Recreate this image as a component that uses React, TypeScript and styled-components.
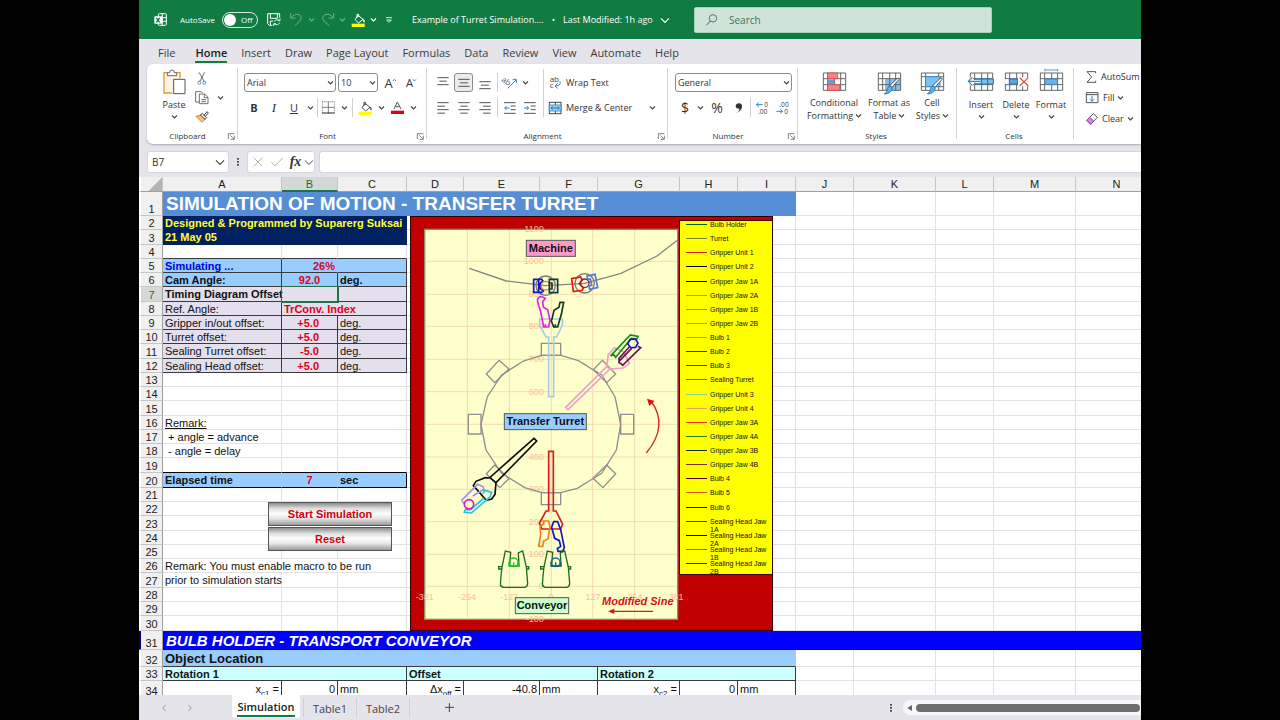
import React from "react";
import styled, { createGlobalStyle, css } from "styled-components";

const UI = `"Open Sans", "Noto Sans", sans-serif`;
const SHEET = `"Liberation Sans", Arial, sans-serif`;
const GREEN = "#107c41";

const GlobalStyle = createGlobalStyle`
  *, *::before, *::after { box-sizing: border-box; }
  body { margin: 0; background: #000; overflow: hidden; }
  button, input, select { font: inherit; color: inherit; margin: 0; }
`;

/* ---------- frame ---------- */

const Stage = styled.div`
  height: 100vh;
  padding: 0 139px;
  background: #000;
`;

const Window = styled.div`
  height: 100%;
  display: flex;
  flex-direction: column;
  overflow: hidden;
  background: #e4e4ea;
  color: #333;
  font: 9px/12px ${UI};
  white-space: nowrap;
`;

/* ---------- shared parts ---------- */

const Row = styled.div<{ $gap?: number; $h?: number }>`
  display: flex;
  align-items: center;
  gap: ${(p) => p.$gap ?? 0}px;
  height: ${(p) => (p.$h ? `${p.$h}px` : "auto")};
`;

const Slot = styled.button<{ $w: number; $on?: boolean; $dim?: boolean }>`
  flex: none;
  width: ${(p) => p.$w}px;
  height: 19px;
  padding: 0;
  display: flex;
  align-items: center;
  justify-content: center;
  border: 1px solid ${(p) => (p.$on ? "#8a8a8a" : "transparent")};
  border-radius: 3px;
  background: ${(p) => (p.$on ? "#ebebeb" : "transparent")};
  opacity: ${(p) => (p.$dim ? 0.4 : 1)};
`;

const Rule = styled.span<{ $tall?: boolean }>`
  flex: none;
  width: 1px;
  height: ${(p) => (p.$tall ? 48 : 19)}px;
  margin: 0 1px;
  background: #d0d0d0;
`;

const Svg = styled.svg`
  flex: none;
  display: block;
  overflow: visible;
  fill: none;
`;

/* Icon artwork is drawn on a grid of three units to the pixel. */
function Art({ box, children }: { box: [number, number, number, number]; children: React.ReactNode }) {
  return (
    <Svg width={Math.round(box[2] / 3)} height={Math.round(box[3] / 3)} viewBox={box.join(" ")} aria-hidden>
      {children}
    </Svg>
  );
}

function Chevron({ size = 5, color = "#444" }: { size?: number; color?: string }) {
  return (
    <Svg width={size} height={size} viewBox="0 0 10 10" aria-hidden>
      <path d="M0 3 L5 8 L10 3" stroke={color} strokeWidth={size > 6 ? 1.4 : 2.2} />
    </Svg>
  );
}

/* ---------- title bar ---------- */

const TitleBar = styled.header`
  flex: none;
  display: flex;
  align-items: center;
  height: 39px;
  padding-left: 15px;
  background: ${GREEN};
  color: #fff;
`;

const AutoSave = styled.label`
  flex: none;
  display: flex;
  align-items: center;
  justify-content: space-between;
  width: 78px;
  margin-left: 13px;
  font-size: 8px;
`;

const Toggle = styled.span`
  display: grid;
  align-items: center;
  width: 36px;
  height: 16px;
  > * { grid-area: 1 / 1; }
  > span { padding-left: 19px; }
`;

const ToggleInput = styled.input`
  appearance: none;
  width: 36px;
  height: 16px;
  border: 1px solid #d8ebe0;
  border-radius: 8px;
  &::before {
    content: "";
    display: block;
    width: 12px;
    height: 12px;
    margin: 1px;
    border-radius: 50%;
    background: #fff;
  }
`;

const DocTitle = styled.button`
  flex: none;
  display: flex;
  align-items: center;
  gap: 8px;
  width: 293px;
  padding: 0 0 0 11px;
  border: 0;
  background: none;
`;

const SearchBox = styled.label`
  flex: none;
  display: flex;
  align-items: center;
  gap: 11px;
  width: 298px;
  height: 26px;
  padding-left: 11px;
  border: 1px solid #a9d0b9;
  border-radius: 2px;
  background: #cfe4d8;
  color: #2c6a48;
  font-size: 10px;
`;

const SearchInput = styled.input`
  flex: 1;
  border: 0;
  padding: 0;
  background: none;
  outline: none;
  &::placeholder { color: #3d7455; opacity: 1; }
`;

function Bucket({ line }: { line: string }) {
  return (
    <Art box={[637, 36, 42, 42]}>
      <path d="M658 43 L673 55 L660 66 L649 56 Z M655 51 V40 H660 V48" stroke={line} strokeWidth="3" />
      <path d="M671 54 Q679 60 675 64" stroke={line} strokeWidth="4" />
      <rect x="639" y="68" width="39" height="10" fill="#ffff00" />
    </Art>
  );
}

function TitleStrip() {
  return (
    <TitleBar>
      <Art box={[44, 39, 39, 39]}>
        <rect x="57" y="41" width="24" height="35" rx="3" stroke="#fff" strokeWidth="3" />
        <path d="M69 41 V76 M57 53 H81 M57 64 H81" stroke="#fff" strokeWidth="3" />
        <rect x="45" y="49" width="23" height="22" rx="2" fill="#fff" />
        <path d="M51 54 L61 67 M61 54 L51 67" stroke={GREEN} strokeWidth="4" />
      </Art>
      <AutoSave>
        AutoSave
        <Toggle>
          <ToggleInput type="checkbox" />
          <span>Off</span>
        </Toggle>
      </AutoSave>
      <Slot $w={31} aria-label="Save">
        <Art box={[384, 38, 42, 39]}>
          <path d="M400 75 H391 L386 70 V40 H422 V52 M394 40 V54 H415 V40 M394 75 V62 H402" stroke="#fff" strokeWidth="3" />
          <path d="M405 64 Q410 55 421 59 M423 54 V61 H416 M423 67 Q417 77 406 72 M404 77 V70 H411" stroke="#fff" strokeWidth="2.5" />
        </Art>
      </Slot>
      <Slot $w={14} $dim aria-label="Undo">
        <Art box={[454, 38, 36, 39]}>
          <path d="M456 39 V53 H471 M457 52 Q470 38 482 43 Q492 52 483 62 L469 76" stroke="#fff" strokeWidth="3" />
        </Art>
      </Slot>
      <Slot $w={16} $dim aria-label="Undo history"><Chevron color="#fff" /></Slot>
      <Slot $w={18} $dim aria-label="Redo">
        <Art box={[546, 38, 36, 39]}>
          <path d="M581 39 V53 H566 M580 52 Q567 38 555 43 Q543 52 552 62 L568 76" stroke="#fff" strokeWidth="3" />
        </Art>
      </Slot>
      <Slot $w={10} $dim aria-label="Redo history"><Chevron color="#fff" /></Slot>
      <Slot $w={22} aria-label="Fill color"><Bucket line="#fff" /></Slot>
      <Slot $w={8} aria-label="Fill color options"><Chevron color="#fff" /></Slot>
      <Slot $w={24} aria-label="Customize toolbar">
        <Art box={[742, 51, 18, 18]}>
          <path d="M742 53 H760 M744 60 L751 67 L758 60 Z" stroke="#fff" strokeWidth="2.5" />
        </Art>
      </Slot>
      <DocTitle>
        <span>Example of Turret Simulation....</span>
        <span>•</span>
        <span>Last Modified: 1h ago</span>
        <Chevron size={8} color="#fff" />
      </DocTitle>
      <SearchBox>
        <Art box={[706, 39, 36, 36]}>
          <circle cx="727" cy="52" r="11" stroke="#2c6a48" strokeWidth="2.5" />
          <path d="M719 60 L707 73" stroke="#2c6a48" strokeWidth="3" />
        </Art>
        <SearchInput type="text" placeholder="Search" aria-label="Search" />
      </SearchBox>
    </TitleBar>
  );
}

/* ---------- ribbon tabs ---------- */

const Tabs = styled.nav`
  flex: none;
  display: flex;
  height: 25px;
  padding-left: 12px;
  font-size: 11px;
`;

const RibbonTab = styled.button<{ $active?: boolean }>`
  padding: 1px 7px 0;
  border: 0;
  background: none;
  font-weight: ${(p) => (p.$active ? 600 : 400)};
  color: ${(p) => (p.$active ? "#222" : "#3c3c3c")};
  &:first-child { margin-right: 6px; }
  > span {
    display: block;
    height: 21px;
    line-height: 21px;
    border-bottom: 2px solid ${(p) => (p.$active ? GREEN : "transparent")};
  }
`;

const tabNames = ["File", "Home", "Insert", "Draw", "Page Layout", "Formulas", "Data", "Review", "View", "Automate", "Help"];

/* ---------- ribbon ---------- */

const Ribbon = styled.section`
  flex: none;
  display: flex;
  height: 80px;
  margin-left: 8px;
  border-radius: 6px 0 0 6px;
  background: #fff;
  box-shadow: 0 1px 2px #a8a8b0;
`;

const Group = styled.div<{ $w: number; $pad?: number; $top?: number }>`
  flex: none;
  position: relative;
  display: flex;
  flex-direction: column;
  justify-content: space-between;
  width: ${(p) => p.$w}px;
  padding: ${(p) => p.$top ?? 5}px 0 2px ${(p) => p.$pad ?? 0}px;
  &:not(:last-child)::after {
    content: "";
    position: absolute;
    right: 0;
    top: 4px;
    bottom: 5px;
    width: 1px;
    background: #d4d4d4;
  }
`;

const GroupFoot = styled.div<{ $pad?: number }>`
  display: flex;
  align-items: center;
  height: 12px;
  margin-left: -${(p) => p.$pad ?? 0}px;
  padding-right: 3px;
  font-size: 8px;
  > span { flex: 1; text-align: center; }
`;

const Launcher = styled.button`
  padding: 0;
  border: 0;
  background: none;
`;

const Stack = styled.div<{ $gap?: number; $w?: number }>`
  display: flex;
  flex-direction: column;
  gap: ${(p) => p.$gap ?? 0}px;
  width: ${(p) => (p.$w ? `${p.$w}px` : "auto")};
`;

const BigButton = styled.button<{ $w: number; $gap?: number }>`
  flex: none;
  align-self: flex-start;
  display: flex;
  flex-direction: column;
  align-items: center;
  gap: ${(p) => p.$gap ?? 2}px;
  width: ${(p) => p.$w}px;
  padding: 0;
  border: 0;
  background: none;
  line-height: 13px;
  text-align: center;
  > span { display: flex; align-items: center; gap: 3px; height: 11px; }
`;

const ArtBox = styled.i`
  display: flex;
  align-items: center;
  justify-content: center;
  height: 26px;
`;

const TextButton = styled.button<{ $w?: number }>`
  flex: none;
  display: flex;
  align-items: center;
  gap: 4px;
  width: ${(p) => (p.$w ? `${p.$w}px` : "auto")};
  height: 19px;
  padding: 0;
  border: 0;
  background: none;
`;

const Combo = styled.span<{ $w: number }>`
  position: relative;
  flex: none;
  display: block;
  width: ${(p) => p.$w}px;
  > svg { position: absolute; right: 3px; top: 7px; pointer-events: none; }
`;

const ComboSelect = styled.select`
  appearance: none;
  display: block;
  width: 100%;
  height: 19px;
  padding: 0 2px;
  border: 1px solid #8c8c8c;
  border-radius: 3px;
  background: #fff;
`;

function Picker({ w, label, value }: { w: number; label: string; value: string }) {
  return (
    <Combo $w={w}>
      <ComboSelect aria-label={label} defaultValue={value}>
        <option>{value}</option>
      </ComboSelect>
      <Chevron />
    </Combo>
  );
}

const Letter = styled.span<{ $size?: number; $style?: "bold" | "italic" | "underline" }>`
  font-size: ${(p) => p.$size ?? 11}px;
  line-height: 16px;
  ${(p) => p.$style === "bold" && css`font-weight: 700;`}
  ${(p) => p.$style === "italic" && css`font-style: italic; font-family: "Liberation Serif", serif;`}
  ${(p) => p.$style === "underline" && css`text-decoration: underline;`}
`;

function Foot({ name, launcher, pad }: { name: string; launcher?: boolean; pad?: number }) {
  return (
    <GroupFoot $pad={pad}>
      <span>{name}</span>
      {launcher && (
        <Launcher aria-label={`${name} settings`}>
          <Art box={[265, 399, 21, 21]}>
            <path d="M266 417 V401 H284 M272 406 L283 417 M284 407 V418 H273" stroke="#555" strokeWidth="2.2" />
          </Art>
        </Launcher>
      )}
    </GroupFoot>
  );
}

/* Three or four text rules, each given as [start, end] on a 36-unit width. */
function Lines({ rows, top = 0 }: { rows: [number, number][]; top?: number }) {
  return (
    <Art box={[0, 0, 36, 36]}>
      {rows.map(([a, b], i) => (
        <path key={i} d={`M${a} ${top + 2 + i * 10.5} H${b}`} stroke="#555" strokeWidth="3" />
      ))}
    </Art>
  );
}

const wide: [number, number] = [1, 35];

function ClipboardGroup() {
  return (
    <Group $w={91} $pad={10}>
      <Row>
        <BigButton $w={34} $gap={4}>
          <ArtBox>
            <Art box={[77, 209, 69, 78]}>
              <path d="M105 281 H80 V220 H92 M115 220 H128 V237" stroke="#e8912d" strokeWidth="4" />
              <path d="M84 224 H124 V238 H107 V277 H84 Z" fill="#fdf3e4" />
              <path d="M90 229 V220 H97 Q97 212 104 212 Q111 212 111 220 H118 V229 Z" fill="#fff" stroke="#666" strokeWidth="3" />
              <path d="M109 240 H143 V283 H109 Z" fill="#fff" stroke="#555" strokeWidth="3" />
            </Art>
          </ArtBox>
          <span>Paste</span>
          <Chevron />
        </BigButton>
        <Stack $w={22}>
          <Slot $w={22} aria-label="Cut">
            <Art box={[174, 210, 30, 39]}>
              <path d="M180 211 L196 239 M197 211 L182 239" stroke="#555" strokeWidth="2.5" />
              <circle cx="181" cy="242" r="4.5" stroke="#2b88c9" strokeWidth="2.5" />
              <circle cx="196" cy="242" r="4.5" stroke="#2b88c9" strokeWidth="2.5" />
            </Art>
          </Slot>
          <Slot $w={22} aria-label="Copy">
            <Art box={[168, 270, 42, 39]}>
              <path d="M181 303 H170 V272 H187 L191 276 M181 279 H197 L207 289 V308 H181 Z M196 279 V290 H207 M187 296 H201 M187 302 H201" stroke="#555" strokeWidth="2.5" />
            </Art>
          </Slot>
          <Slot $w={22} aria-label="Format painter">
            <Art box={[168, 333, 42, 36]}>
              <path d="M171 349 L187 345 L199 357 L189 367 Z" fill="#f6c27c" stroke="#d9822b" strokeWidth="3" />
              <path d="M184 345 L190 341 L203 353 L198 358 Z M195 346 L204 335 L208 339 L199 349" fill="#fff" stroke="#444" strokeWidth="3" />
            </Art>
          </Slot>
        </Stack>
        <Slot $w={14} aria-label="Copy options"><Chevron /></Slot>
      </Row>
      <Foot name="Clipboard" launcher pad={10} />
    </Group>
  );
}

function FontGroup() {
  return (
    <Group $w={189} $pad={6}>
      <Stack $gap={2}>
        <Row $h={27} $gap={2}>
          <Picker w={92} label="Font" value="Arial" />
          <Picker w={40} label="Font size" value="10" />
          <Slot $w={20} aria-label="Grow font">
            <Letter $size={13}>A</Letter>
            <Art box={[0, 0, 9, 24]}><path d="M0 6 L4 1 L9 6" stroke="#2b88c9" strokeWidth="3" /></Art>
          </Slot>
          <Slot $w={18} aria-label="Shrink font">
            <Letter>A</Letter>
            <Art box={[0, 0, 9, 24]}><path d="M0 1 L4 6 L9 1" stroke="#2b88c9" strokeWidth="3" /></Art>
          </Slot>
        </Row>
        <Row>
          <Slot $w={20}><Letter $style="bold">B</Letter></Slot>
          <Slot $w={20}><Letter $size={13} $style="italic">I</Letter></Slot>
          <Slot $w={20}><Letter $style="underline">U</Letter></Slot>
          <Slot $w={12} aria-label="Underline options"><Chevron /></Slot>
          <Rule />
          <Slot $w={19} aria-label="Borders">
            <Art box={[554, 305, 39, 39]}>
              <path d="M555 307 H591 V343 M555 307 V343" stroke="#555" strokeWidth="2.5" strokeDasharray="3 3" />
              <path d="M573 307 V343 M555 324 H591" stroke="#666" strokeWidth="2.5" />
              <path d="M554 341 H592" stroke="#444" strokeWidth="3.5" />
            </Art>
          </Slot>
          <Slot $w={13} aria-label="Border options"><Chevron /></Slot>
          <Rule />
          <Slot $w={22} aria-label="Fill color"><Bucket line="#46535e" /></Slot>
          <Slot $w={10} aria-label="Fill color options"><Chevron /></Slot>
          <Slot $w={22} aria-label="Font color">
            <Art box={[758, 305, 39, 39]}>
              <path d="M767 329 L777 308 L788 329 M771 322 H784" stroke="#555" strokeWidth="3" />
              <rect x="758" y="334" width="39" height="10" fill="#e3000f" />
            </Art>
          </Slot>
          <Slot $w={10} aria-label="Font color options"><Chevron /></Slot>
        </Row>
      </Stack>
      <Foot name="Font" launcher pad={6} />
    </Group>
  );
}

function AlignmentGroup() {
  return (
    <Group $w={241} $pad={6}>
      <Row $gap={4}>
        <Stack $gap={2} $w={105}>
          <Row $h={27} $gap={1}>
            <Slot $w={20} aria-label="Top align"><Lines rows={[wide, [7, 29], wide]} /></Slot>
            <Slot $w={19} $on aria-label="Middle align"><Lines rows={[wide, [6, 30], wide]} top={5} /></Slot>
            <Slot $w={21} aria-label="Bottom align"><Lines rows={[wide, [6, 30], wide]} top={12} /></Slot>
            <Rule />
            <Slot $w={19} aria-label="Orientation">
              <Art box={[90, 226, 42, 39]}>
                <text x="86" y="247" fontSize="24" fill="#555" transform="rotate(35 96 240)">ab</text>
                <path d="M104 263 L129 238 M119 236 H130 V247" stroke="#2b88c9" strokeWidth="3" />
              </Art>
            </Slot>
            <Slot $w={10} aria-label="Orientation options"><Chevron /></Slot>
          </Row>
          <Row $gap={1}>
            <Slot $w={20} aria-label="Align left"><Lines rows={[wide, [1, 24], wide, [1, 24]]} /></Slot>
            <Slot $w={19} aria-label="Center"><Lines rows={[wide, [7, 29], wide, [7, 29]]} /></Slot>
            <Slot $w={21} aria-label="Align right"><Lines rows={[wide, [12, 35], wide, [12, 35]]} /></Slot>
            <Rule />
            <Slot $w={19} aria-label="Decrease indent">
              <Art box={[93, 306, 36, 36]}>
                <path d="M93 308 H128 M113 318 H128 M113 329 H128 M93 340 H128" stroke="#555" strokeWidth="3" />
                <path d="M95 324 H109 M101 318 L95 324 L101 330" stroke="#2b88c9" strokeWidth="3" />
              </Art>
            </Slot>
            <Slot $w={19} aria-label="Increase indent">
              <Art box={[155, 306, 36, 36]}>
                <path d="M155 308 H190 M175 318 H190 M175 329 H190 M155 340 H190" stroke="#555" strokeWidth="3" />
                <path d="M155 324 H169 M163 318 L169 324 L163 330" stroke="#2b88c9" strokeWidth="3" />
              </Art>
            </Slot>
          </Row>
        </Stack>
        <Rule $tall />
        <Stack $gap={2}>
          <Row $h={27}>
            <TextButton>
              <Art box={[243, 228, 39, 39]}>
                <text x="245" y="246" fontSize="24" fill="#444">ab</text>
                <text x="245" y="265" fontSize="24" fill="#444">c</text>
                <path d="M276 244 Q280 257 262 258 M269 250 L261 258 L269 265" stroke="#2b88c9" strokeWidth="3" />
              </Art>
              Wrap Text
            </TextButton>
          </Row>
          <Row>
            <TextButton $w={97}>
              <Art box={[241, 306, 39, 36]}>
                <rect x="242" y="307" width="35" height="34" fill="#fff" stroke="#444" strokeWidth="3" />
                <path d="M242 315 H277 V333 H242 Z" fill="#a9d5f5" stroke="#2b88c9" strokeWidth="2.5" />
                <path d="M260 307 V315 M260 333 V341" stroke="#444" strokeWidth="3" />
                <path d="M247 324 H272 M252 319 L247 324 L252 329 M267 319 L272 324 L267 329" stroke="#1b6fae" strokeWidth="3" />
              </Art>
              Merge &amp; Center
            </TextButton>
            <Slot $w={12} aria-label="Merge options"><Chevron /></Slot>
          </Row>
        </Stack>
      </Row>
      <Foot name="Alignment" launcher pad={6} />
    </Group>
  );
}

function DecimalArt({ more }: { more?: boolean }) {
  return (
    <Art box={[0, 0, 39, 39]}>
      <text x={more ? 25 : 10} y="17" fontSize="20" fill="#444">{more ? "0" : ".00"}</text>
      <text x={more ? 6 : 25} y="38" fontSize="20" fill="#444">{more ? ".00" : "0"}</text>
      {more ? (
        <path d="M1 11 H20 M8 5 L1 11 L8 17" stroke="#2b88c9" strokeWidth="3" />
      ) : (
        <path d="M1 31 H20 M13 25 L20 31 L13 37" stroke="#2b88c9" strokeWidth="3" />
      )}
    </Art>
  );
}

function NumberGroup() {
  return (
    <Group $w={130} $pad={7}>
      <Stack $gap={2}>
        <Row $h={27}><Picker w={117} label="Number format" value="General" /></Row>
        <Row>
          <Slot $w={20}><Letter $size={14}>$</Letter></Slot>
          <Slot $w={11} aria-label="Currency options"><Chevron /></Slot>
          <Slot $w={22}><Letter $size={14}>%</Letter></Slot>
          <Slot $w={21} aria-label="Comma style">
            <Art box={[796, 309, 24, 30]}>
              <path d="M799 339 Q811 333 809 326 Q798 326 798 318 Q799 310 808 310 Q818 311 817 321 Q815 335 799 339 Z" fill="#333" />
            </Art>
          </Slot>
          <Rule />
          <Slot $w={20} aria-label="Increase decimal"><DecimalArt more /></Slot>
          <Slot $w={21} aria-label="Decrease decimal"><DecimalArt /></Slot>
        </Row>
      </Stack>
      <Foot name="Number" launcher pad={7} />
    </Group>
  );
}

const gridPath = "M70 219 H137 V271 H70 Z M70 236 H137 M70 254 H137 M83 219 V271 M104 219 V271 M122 219 V271";

function Brush() {
  return (
    <g>
      <path d="M133 237 L111 262 L105 256 L126 236 Q133 231 133 237 Z" fill="#fff" stroke="#444" strokeWidth="2.5" />
      <path d="M105 257 L112 264 Q108 282 88 282 Q98 275 97 266 Q100 258 105 257 Z" fill="#5eb0ea" stroke="#1b6fae" strokeWidth="2.5" />
    </g>
  );
}

function StylesGroup() {
  return (
    <Group $w={159} $pad={8}>
      <Row>
        <BigButton $w={56}>
          <ArtBox>
            <Art box={[69, 213, 69, 66]}>
              <path d={gridPath} stroke="#666" strokeWidth="3" />
              <path d="M83 219 H113 V236 H83 Z M83 254 H119 V271 H83 Z" fill="#f98287" stroke="#d8484f" strokeWidth="2.5" />
              <path d="M83 238 H103 V252 H83 Z" fill="#5f9fd8" />
            </Art>
          </ArtBox>
          <span>Conditional</span>
          <span>Formatting <Chevron /></span>
        </BigButton>
        <BigButton $w={54}>
          <ArtBox>
            <Art box={[69, 213, 69, 66]}>
              <path d="M90 236 H137 V271 H90 Z" fill="#7fc0f2" />
              <path d={gridPath} stroke="#666" strokeWidth="3" />
              <Brush />
            </Art>
          </ArtBox>
          <span>Format as</span>
          <span>Table <Chevron /></span>
        </BigButton>
        <BigButton $w={32}>
          <ArtBox>
            <Art box={[69, 213, 69, 66]}>
              <path d="M70 219 H137 V271 H70 Z M70 230 H137 M83 219 V271 M122 219 V271 M70 260 H137" stroke="#666" strokeWidth="3" />
              <path d="M83 230 H126 V260 H83 Z" fill="#7fc0f2" stroke="#2b88c9" strokeWidth="2.5" />
              <Brush />
            </Art>
          </ArtBox>
          <span>Cell</span>
          <span>Styles <Chevron /></span>
        </BigButton>
      </Row>
      <Foot name="Styles" pad={8} />
    </Group>
  );
}

function CellsGroup() {
  return (
    <Group $w={117} $pad={6}>
      <Row>
        <BigButton $w={36} $gap={4}>
          <ArtBox>
            <Art box={[66, 213, 75, 66]}>
              <path d={gridPath} stroke="#666" strokeWidth="3" />
              <path d="M86 237 H139 V252 H86 Z" fill="#7fc0f2" stroke="#2272b4" strokeWidth="3" />
              <path d="M122 237 V252 M104 237 V252" stroke="#2272b4" strokeWidth="3" />
              <path d="M64 244 H98 M76 232 L64 244 L76 257" stroke="#fff" strokeWidth="8" />
              <path d="M64 244 H98 M76 232 L64 244 L76 257" stroke="#2b88c9" strokeWidth="3.5" />
            </Art>
          </ArtBox>
          <span>Insert</span>
          <Chevron />
        </BigButton>
        <BigButton $w={34} $gap={4}>
          <ArtBox>
            <Art box={[69, 213, 69, 66]}>
              <path d={gridPath} stroke="#666" strokeWidth="3" />
              <path d="M68 238 H80 V252 H68 Z M108 232 H141 V259 H108 Z" fill="#fff" />
              <path d="M82 237 H106 V252 H82 Z" fill="#5ba6e4" stroke="#2272b4" strokeWidth="3" />
              <path d="M113 233 L139 258 M139 233 L113 258" stroke="#e0474f" strokeWidth="3.5" />
            </Art>
          </ArtBox>
          <span>Delete</span>
          <Chevron />
        </BigButton>
        <BigButton $w={36} $gap={4}>
          <ArtBox>
            <Art box={[69, 213, 69, 66]}>
              <path d={gridPath} stroke="#666" strokeWidth="3" />
              <path d="M86 237 H121 V253 H86 Z" fill="#6cb2ea" stroke="#2b88c9" strokeWidth="2.5" />
              <path d="M84 210 H122 M84 206 V214 M122 206 V214" stroke="#2b88c9" strokeWidth="2.5" />
            </Art>
          </ArtBox>
          <span>Format</span>
          <Chevron />
        </BigButton>
      </Row>
      <Foot name="Cells" pad={6} />
    </Group>
  );
}

function EditingGroup() {
  return (
    <Group $w={110} $pad={12} $top={3}>
      <Stack $gap={2}>
        <TextButton>
          <Art box={[857, 209, 33, 36]}>
            <path d="M886 216 V211 H860 L874 227 L860 243 H886 V238" stroke="#555" strokeWidth="3" />
          </Art>
          AutoSum
        </TextButton>
        <TextButton>
          <Art box={[855, 273, 39, 33]}>
            <path d="M856 275 H891 V305 H856 Z M856 281 H891" stroke="#555" strokeWidth="3" />
            <path d="M873 284 V301 M866 294 L873 301 L880 294" stroke="#2b88c9" strokeWidth="3" />
          </Art>
          Fill <Chevron />
        </TextButton>
        <TextButton>
          <Art box={[855, 333, 36, 36]}>
            <path d="M857 355 L877 335 L889 346 L869 367 Z" fill="#fff" stroke="#555" strokeWidth="3" />
            <path d="M857 355 L866 346 L878 357 L869 367 Z" fill="#cf8adf" stroke="#9b3fb3" strokeWidth="3" />
          </Art>
          Clear <Chevron />
        </TextButton>
      </Stack>
    </Group>
  );
}

/* ---------- formula bar ---------- */

const FormulaBar = styled.div`
  flex: none;
  display: flex;
  align-items: center;
  height: 33px;
  padding: 2px 0 0 8px;
  font-size: 11px;
`;

const NameBox = styled.label`
  flex: none;
  display: flex;
  align-items: center;
  width: 82px;
  height: 22px;
  padding: 0 4px;
  border: 1px solid #d6d6dc;
  border-radius: 3px;
  background: #fff;
`;

const PlainInput = styled.input`
  flex: 1;
  min-width: 0;
  padding: 0;
  border: 0;
  background: none;
  outline: none;
  font-size: 10px;
`;

const FxBox = styled.div`
  flex: none;
  display: flex;
  align-items: center;
  width: 68px;
  height: 22px;
  border: 1px solid #d6d6dc;
  border-radius: 3px;
  background: #fff;
`;

const Fx = styled.em`
  font: italic 700 14px/18px "Liberation Serif", serif;
`;

const FormulaInput = styled.input`
  flex: 1;
  min-width: 0;
  height: 22px;
  margin-left: 4px;
  border: 1px solid #d6d6dc;
  border-right: 0;
  border-radius: 3px 0 0 3px;
  background: #fff;
`;

function Dots() {
  return (
    <Art box={[0, 0, 6, 30]}>
      <path d="M3 3 v5 M3 12 v5 M3 21 v5" stroke="#333" strokeWidth="5" />
    </Art>
  );
}

/* ---------- worksheet ---------- */

const Sheet = styled.main`
  flex: 1;
  min-height: 0;
  position: relative;
  overflow: hidden;
  background: #fff;
  font-family: ${SHEET};
  color: #111;
`;

const Grid = styled.table`
  table-layout: fixed;
  width: 1019px;
  border-collapse: separate;
  border-spacing: 0;
  font-size: 11px;
  line-height: 12px;
`;

const Line = styled.tr<{ $h: number }>`
  height: ${(p) => p.$h}px;
`;

const ColHead = styled.th<{ $on?: boolean }>`
  padding: 0;
  font-weight: 400;
  background: ${(p) => (p.$on ? "#d4d8d6" : "#f0f0f0")};
  color: ${(p) => (p.$on ? "#1d6b41" : "#222")};
  border-right: 1px solid #c6c6c6;
  border-bottom: ${(p) => (p.$on ? "2px solid #217346" : "1px solid #a0a0a0")};
`;

const Corner = styled(ColHead)`
  border-left: 2px solid #fff;
  background: linear-gradient(135deg, #f0f0f0 62%, #b4b4b4 62%);
`;

const RowHead = styled.th<{ $on?: boolean; $edge?: string }>`
  padding: 0;
  font-weight: 400;
  vertical-align: bottom;
  background: ${(p) => (p.$on ? "#d4d8d6" : "#f0f0f0")};
  color: ${(p) => (p.$on ? "#1d6b41" : "#222")};
  border-left: 2px solid ${(p) => p.$edge ?? "#fff"};
  border-right: 1px solid #a0a0a0;
  border-bottom: 1px solid #c6c6c6;
`;

type CellStyle = {
  fill?: string;
  color?: string;
  bold?: boolean;
  italic?: boolean;
  underline?: boolean;
  align?: "left" | "center" | "right";
  size?: number;
  inset?: number;
  right?: string;
  bottom?: string;
  selected?: boolean;
};

const Cell = styled.td<{ $s: CellStyle }>`
  padding: 0 ${(p) => p.$s.inset ?? 2}px 0 ${(p) => ((p.$s.size ?? 0) > 13 ? 3 : 2)}px;
  white-space: pre;
  text-align: ${(p) => p.$s.align ?? "left"};
  background: ${(p) => p.$s.fill ?? "transparent"};
  color: ${(p) => p.$s.color ?? "inherit"};
  font-weight: ${(p) => (p.$s.bold ? 700 : 400)};
  font-style: ${(p) => (p.$s.italic ? "italic" : "normal")};
  text-decoration: ${(p) => (p.$s.underline ? "underline" : "none")};
  border-right: 1px solid ${(p) => p.$s.right ?? "#e2e2e2"};
  border-bottom: 1px solid ${(p) => p.$s.bottom ?? "#e2e2e2"};
  ${(p) => p.$s.size && css`font-size: ${p.$s.size}px; line-height: ${p.$s.size}px;`}
  ${(p) => p.$s.selected && css`outline: 1px solid #217346;`}
  sub { font-size: 8px; line-height: 0; }
`;

type CellData = CellStyle & { text?: React.ReactNode; span?: number };

const INK = "#3a3a3a";
const SKY = "#99ccff";
const LILAC = "#e4dfec";
const AQUA = "#ccffff";
const RED = "#e0001b";

const offsetRow = (name: string, value: string): CellData[] => [
  { text: name, fill: LILAC, right: INK, bottom: INK },
  { text: value, fill: LILAC, right: INK, bottom: INK, bold: true, color: RED, align: "right", inset: 18 },
  { text: "deg.", fill: LILAC, right: INK, bottom: INK },
];

const columns: [string, number][] = [
  ["A", 119], ["B", 56], ["C", 69], ["D", 57], ["E", 76], ["F", 58], ["G", 82],
  ["H", 58], ["I", 58], ["J", 58], ["K", 82], ["L", 58], ["M", 82], ["N", 82],
];

const rowHeights = [
  24, 14, 15, 14, 14, 14, 15, 14, 14, 14, 15, 14, 14, 14, 15, 14, 14, 14, 15, 15,
  14, 14, 15, 14, 14, 14, 15, 14, 14, 15, 19, 17, 14, 17,
];

const content: Record<number, CellData[]> = {
  1: [{ text: "SIMULATION OF MOTION - TRANSFER TURRET", span: 9, fill: "#558ed5", color: "#fff", bold: true, size: 19, right: "#558ed5", bottom: "#558ed5" }],
  2: [{ text: "Designed & Programmed by Suparerg Suksai", span: 3, fill: "#002060", color: "#ffff33", bold: true, right: "#002060", bottom: "#002060" }],
  3: [{ text: "21 May 05", span: 3, fill: "#002060", color: "#ffff33", bold: true, right: "#002060", bottom: "#002060" }],
  4: [{ bottom: INK }, { bottom: INK }, { bottom: INK }],
  5: [
    { text: "Simulating ...", fill: SKY, color: "#0000e0", bold: true, right: INK, bottom: INK },
    { text: "26%", fill: SKY, color: RED, bold: true, align: "right", right: SKY, bottom: INK },
    { fill: SKY, right: INK, bottom: INK },
  ],
  6: [
    { text: "Cam Angle:", fill: SKY, bold: true, right: INK, bottom: INK },
    { text: "92.0", fill: SKY, color: RED, bold: true, align: "center", right: INK, bottom: INK },
    { text: "deg.", fill: SKY, bold: true, right: INK, bottom: INK },
  ],
  7: [
    { text: "Timing Diagram Offset", fill: LILAC, bold: true, inset: 0, right: LILAC, bottom: INK },
    { fill: LILAC, selected: true, right: "#217346", bottom: "#217346" },
    { fill: LILAC, right: INK, bottom: INK },
  ],
  8: [
    { text: "Ref. Angle:", fill: LILAC, right: INK, bottom: INK },
    { text: "TrConv. Index", span: 2, fill: LILAC, color: RED, bold: true, right: INK, bottom: INK },
  ],
  9: offsetRow("Gripper in/out offset:", "+5.0"),
  10: offsetRow("Turret offset:", "+5.0"),
  11: offsetRow("Sealing Turret offset:", "-5.0"),
  12: offsetRow("Sealing Head offset:", "+5.0"),
  16: [{ text: "Remark:", underline: true }],
  17: [{ text: " + angle = advance" }],
  18: [{ text: " - angle = delay" }],
  19: [{ bottom: "#000" }, { bottom: "#000" }, { bottom: "#000" }],
  20: [
    { text: "Elapsed time", fill: SKY, bold: true, right: SKY, bottom: "#000" },
    { text: "7", fill: SKY, bold: true, color: RED, align: "center", right: SKY, bottom: "#000" },
    { text: "sec", fill: SKY, bold: true, right: "#000", bottom: "#000" },
  ],
  26: [{ text: "Remark: You must enable macro to be run", span: 3 }],
  27: [{ text: "prior to simulation starts" }],
  31: [{ text: "BULB HOLDER - TRANSPORT CONVEYOR", span: 14, fill: "#0000ff", color: "#fff", bold: true, italic: true, size: 15, bottom: "#0000a0" }],
  32: [{ text: "Object Location", span: 9, fill: SKY, bold: true, size: 13, right: SKY, bottom: INK }],
  33: [
    { text: "Rotation 1", span: 3, fill: AQUA, bold: true, right: INK, bottom: INK },
    { text: "Offset", span: 3, fill: AQUA, bold: true, right: INK, bottom: INK },
    { text: "Rotation 2", span: 3, fill: AQUA, bold: true, right: INK, bottom: INK },
  ],
  34: [
    { text: <>x<sub>c1</sub> =</>, align: "right", right: INK },
    { text: "0", align: "right", right: INK },
    { text: "mm", right: INK },
    { text: <>Δx<sub>off</sub> =</>, align: "right", right: INK },
    { text: "-40.8", align: "right", right: INK },
    { text: "mm", right: INK },
    { text: <>x<sub>c2</sub> =</>, align: "right", right: INK },
    { text: "0", align: "right", right: INK },
    { text: "mm", right: INK },
  ],
};

function SheetGrid() {
  return (
    <Grid>
      <colgroup>
        <col width={24} />
        {columns.map(([n, w]) => <col key={n} width={w} />)}
      </colgroup>
      <thead>
        <Line $h={15}>
          <Corner aria-label="Select all" />
          {columns.map(([n]) => <ColHead key={n} scope="col" $on={n === "B"}>{n}</ColHead>)}
        </Line>
      </thead>
      <tbody>
        {rowHeights.map((h, i) => {
          const n = i + 1;
          const cells = content[n] ?? [];
          const used = cells.reduce((t, c) => t + (c.span ?? 1), 0);
          return (
            <Line key={n} $h={h}>
              <RowHead scope="row" $on={n === 7} $edge={n === 31 ? "#000080" : undefined}>{n}</RowHead>
              {cells.map(({ text, span, ...s }, k) => <Cell key={k} colSpan={span} $s={s}>{text}</Cell>)}
              {columns.slice(used).map(([c]) => <Cell key={c} $s={{}} />)}
            </Line>
          );
        })}
      </tbody>
    </Grid>
  );
}

const MacroButtons = styled.div`
  position: absolute;
  left: 129px;
  top: 325px;
  display: flex;
  flex-direction: column;
  gap: 1px;
  width: 124px;
`;

const MacroButton = styled.button`
  height: 24px;
  padding: 0;
  border: 1px solid #555;
  background: linear-gradient(#8c8c8c, #dedede 25%, #fdfdfd 48%, #e6e6e6 70%, #9a9a9a);
  color: #d00010;
  font: 700 11px/14px ${SHEET};
`;

/* ---------- chart ---------- */

const Chart = styled.figure`
  position: absolute;
  left: 271px;
  top: 39px;
  width: 363px;
  height: 415px;
  margin: 0;
  border: 1px solid #300;
  background: #c00000;
  overflow: hidden;
  > svg { display: block; margin: -1px; }
`;

const Legend = styled.ul`
  position: absolute;
  right: 0;
  top: 3px;
  width: 93px;
  height: 355px;
  margin: 0;
  padding: 0 0 0 6px;
  border: 1px solid #400;
  border-right: 0;
  display: flex;
  flex-direction: column;
  background: #ffff00;
  overflow: hidden;
  list-style: none;
  font: 7px/8px ${SHEET};
  color: #111;
`;

const LegendItem = styled.li<{ $c: string }>`
  flex: 1 0 0;
  height: 0;
  display: flex;
  gap: 3px;
  align-items: flex-start;
  white-space: normal;
  &::before {
    content: "";
    flex: none;
    width: 21px;
    height: 1px;
    margin-top: 3px;
    background: ${(p) => p.$c};
  }
`;

const series: [string, string][] = [
  ["Bulb Holder", "#006400"], ["Turret", "#808040"], ["Gripper Unit 1", "#d02000"], ["Gripper Unit 2", "#000000"],
  ["Gripper Jaw 1A", "#000030"], ["Gripper Jaw 2A", "#30d080"], ["Gripper Jaw 1B", "#f07000"], ["Gripper Jaw 2B", "#a0a060"],
  ["Bulb 1", "#40e000"], ["Bulb 2", "#005020"], ["Bulb 3", "#d00010"], ["Sealing Turret", "#707020"],
  ["Gripper Unit 3", "#90d090"], ["Gripper Unit 4", "#f0a060"], ["Gripper Jaw 3A", "#f03020"], ["Gripper Jaw 4A", "#208000"],
  ["Gripper Jaw 3B", "#103010"], ["Gripper Jaw 4B", "#803000"], ["Bulb 4", "#500010"], ["Bulb 5", "#d06000"],
  ["Bulb 6", "#101030"], ["Sealing Head Jaw 1A", "#d00000"], ["Sealing Head Jaw 2A", "#000000"],
  ["Sealing Head Jaw 1B", "#408070"], ["Sealing Head Jaw 2B", "#104010"],
];

const gridX = [172, 298, 424, 548, 674];
const gridY = [139, 238, 334, 433, 530, 628, 726, 823, 920, 1018, 1114];
const yLabels: [string, number][] = [
  ["1100", 43], ["1000", 139], ["900", 238], ["800", 334], ["700", 433], ["600", 530],
  ["400", 726], ["300", 823], ["200", 920], ["100", 1018], ["0", 1114], ["-100", 1213],
];
const xLabels: [string, number][] = [
  ["-381", 44], ["-254", 171], ["-127", 298], ["0", 423], ["127", 549], ["254", 674], ["381", 798],
];

const holder = "M272 1114 Q270 1108 276 1056 L286 1008 L302 1012 L299 1053 H327 L325 1014 L338 1008 L349 1056 L353 1106 Q352 1116 344 1117 H282 Q274 1117 272 1110 M276 1055 H266 V1062 H275 M348 1055 H356 V1062 H349";

function Tag({ x, y, w, fill, children }: { x: number; y: number; w: number; fill: string; children: string }) {
  return (
    <g>
      <rect x={x} y={y} width={w} height="48" fill={fill} stroke="#555" strokeWidth="3" />
      <text x={x + w / 2} y={y + 35} textAnchor="middle" fontSize="33" fontWeight="700" fill="#111">{children}</text>
    </g>
  );
}

function TurretChart() {
  return (
    <Chart aria-label="Transfer turret simulation">
      <Svg width="363" height="415" viewBox="0 3 1089 1245" strokeWidth="4" fontFamily="Liberation Sans, Arial, sans-serif">
        <rect x="44" y="43" width="759" height="1170" fill="#ffffcc" stroke="#8c8c6c" />
        {gridX.map((x) => <path key={x} d={`M${x} 45 V1211`} stroke="#f2dcb4" strokeWidth="3" />)}
        {gridY.map((y) => <path key={y} d={`M46 ${y} H801`} stroke="#f2dcb4" strokeWidth="3" />)}
        <g fontSize="27" fill="#f6c09a">
          {yLabels.map(([t, y]) => <text key={t} x="401" y={y + 9} textAnchor="end">{t}</text>)}
          {xLabels.map(([t, x]) => <text key={t} x={x} y="1156" textAnchor="middle">{t}</text>)}
        </g>
        <g stroke="#8e8e8e">
          <path d="M424 421 H453 L505 437 L575 480 L615 545 L632 628 L619 705 L575 775 L502 820 L452 833 H395 L344 818 L275 775 L228 705 L213 628 L232 545 L275 480 L340 438 L394 421 Z" />
          <path d="M394 385 H452 V421 H394 Z M175 598 H213 V657 H175 Z M632 598 H671 V657 H632 Z M394 833 H452 V869 H394 Z" />
          <path d="M267 436 L297 462 L254 503 L229 477 Z M577 436 L617 477 L590 503 L550 464 Z M590 750 L617 776 L579 818 L549 790 Z M254 750 L229 776 L269 818 L297 791 Z" />
        </g>
        <path d="M178 160 L289 198 L407 212 L524 205 L633 175 L741 123 L802 76" stroke="#858585" />
        <circle cx="407" cy="212" r="29" stroke="#777" />
        <circle cx="524" cy="205" r="29" stroke="#777" />
        {/* sealing heads */}
        <path d="M398 193 H371 V232 H398 M386 193 V232 M400 195 L390 206 V220 L402 230" stroke="#1414c8" strokeWidth="5" />
        <circle cx="407" cy="212" r="13" stroke="#d9822b" />
        <path d="M418 193 H443 V233 H418 Z M418 204 H426 V222 H418" stroke="#123838" strokeWidth="5" />
        <path d="M485 191 L512 186 L516 196 L508 206 L520 218 L517 226 L490 230 Z" stroke="#e01818" strokeWidth="5" />
        <circle cx="524" cy="205" r="13" stroke="#8b1a60" />
        <path d="M531 183 L555 178 L563 218 L539 223 L537 214 L545 211 L541 192 L533 194 Z" stroke="#4a7bd8" strokeWidth="5" />
        {/* gripper unit 3 */}
        <path d="M416 545 V366 H408 L389 330 V312 H457 V330 L440 366 H431 V545 Z" stroke="#a8cbe8" strokeWidth="5" />
        <path d="M401 336 L392 290 L383 262 Q380 248 393 244 L406 250 L398 260 L400 276 L413 284 L420 316 L416 336 Z M406 336 V328" stroke="#e81ee8" strokeWidth="5" />
        <path d="M427 308 L432 286 L447 277 L450 262 L461 262 L454 298 L443 336 H431 L424 318 Z M436 336 V328" stroke="#103a18" strokeWidth="5" />
        {/* gripper unit 4 */}
        <path d="M467 577 L590 455 L595 418 L613 398 L640 410 L658 445 L640 459 L600 462 L474 584 Z M590 455 L600 462" stroke="#f0a0c4" strokeWidth="5" />
        <path d="M603 421 L661 360 L684 364 L680 372 L664 370 L617 427 L612 420 L604 422 Z" stroke="#159015" strokeWidth="5" />
        <path d="M627 439 L665 400 M684 394 L692 398 L638 451 L632 445 L627 443 V430 L658 396" stroke="#6c1458" strokeWidth="5" />
        <path d="M661 373 L676 372 L684 384 L677 397 L662 398 L653 386 Z" stroke="#1414d0" strokeWidth="5" />
        {/* gripper unit 2 */}
        <path d="M372 670 L380 678 L258 803 L255 838 L245 852 L229 856 L190 812 L198 799 L226 788 L238 789 Z M240 788 L258 803" stroke="#0c0c0c" strokeWidth="5" />
        <path d="M154 857 L203 808 L219 815 L222 823 L188 843 M156 858 L163 866" stroke="#a094e8" strokeWidth="5" />
        <path d="M218 836 L225 826 L245 832 L240 846 L184 894 L163 892 L166 884 H182 L222 849" stroke="#28c8d8" strokeWidth="5" />
        <circle cx="177" cy="868" r="14" stroke="#d018d0" strokeWidth="5" />
        {/* gripper unit 1 */}
        <path d="M416 709 H430 V888 H438 L458 928 L452 942 H396 L388 925 L408 888 H416 Z" stroke="#e01818" strokeWidth="5" />
        <path d="M402 926 L400 918 H416 L420 934 L414 972 L401 978 L398 995 L386 994 L392 958 L390 936 Z" stroke="#f08020" strokeWidth="5" />
        <path d="M431 920 H443 L452 944 L463 998 L458 1009 H444 L442 1001 L452 994 L448 977 L434 970 L425 937 Z" stroke="#1414c0" strokeWidth="5" />
        {/* conveyor holders */}
        <path d={holder} stroke="#187018" />
        <path d={holder} transform="translate(126 0)" stroke="#187018" />
        <circle cx="311" cy="1042" r="13" stroke="#20c820" />
        <path d="M297 1040 V1053 H326 V1040 M311 1042 V1053" stroke="#20c820" />
        <circle cx="437" cy="1042" r="13" stroke="#1870a0" />
        <path d="M423 1040 V1053 H452 V1040 M437 1042 V1053" stroke="#185c80" />
        {/* rotation and travel arrows */}
        <path d="M709 714 Q777 632 723 558" stroke="#d82020" />
        <path d="M711 551 L734 558 L718 573 Z" fill="#e01010" />
        <path d="M610 1189 H729" stroke="#b03020" />
        <path d="M594 1189 L613 1181 V1197 Z" fill="#e01010" />
        <text x="576" y="1171" fontSize="33" fontWeight="700" fontStyle="italic" fill="#d81010">Modified Sine</text>
        <Tag x={349} y={76} w={147} fill="#ff99cc">Machine</Tag>
        <Tag x={283} y={596} w={246} fill="#99ccff">Transfer Turret</Tag>
        <Tag x={316} y={1148} w={160} fill="#ccffcc">Conveyor</Tag>
      </Svg>
      <Legend>
        {series.map(([name, color]) => <LegendItem key={name} $c={color}>{name}</LegendItem>)}
      </Legend>
    </Chart>
  );
}

/* ---------- sheet tabs ---------- */

const SheetBar = styled.footer`
  flex: none;
  display: flex;
  align-items: center;
  height: 25px;
  padding-left: 12px;
  font-size: 11px;
`;

const SheetTab = styled.button<{ $w: number; $active?: boolean }>`
  flex: none;
  align-self: flex-start;
  width: ${(p) => p.$w}px;
  height: 23px;
  padding: 2px 0 0;
  border: 0;
  border-radius: 0 0 3px 3px;
  background: ${(p) => (p.$active ? "#fff" : "none")};
  font-weight: ${(p) => (p.$active ? 600 : 400)};
  color: ${(p) => (p.$active ? "#222" : "#444")};
  > span {
    display: inline-block;
    height: 19px;
    line-height: ${(p) => (p.$active ? 17 : 21)}px;
    border-bottom: 2px solid ${(p) => (p.$active ? GREEN : "transparent")};
  }
`;

const Spacer = styled.span`
  flex: 1;
`;

const ScrollTrack = styled.div`
  flex: none;
  display: flex;
  align-items: center;
  gap: 3px;
  width: 238px;
  height: 15px;
  margin-left: 11px;
  padding: 0 1px 0 4px;
  border-radius: 7px 0 0 7px;
  background: #f7f7f9;
`;

const ScrollThumb = styled.span`
  flex: 1;
  height: 8px;
  border-radius: 4px;
  background: #6e6e6e;
`;

export default function App() {
  return (
    <Stage>
      <GlobalStyle />
      <Window>
        <TitleStrip />
        <Tabs>
          {tabNames.map((t) => (
            <RibbonTab key={t} $active={t === "Home"}><span>{t}</span></RibbonTab>
          ))}
        </Tabs>
        <Ribbon>
          <ClipboardGroup />
          <FontGroup />
          <AlignmentGroup />
          <NumberGroup />
          <StylesGroup />
          <CellsGroup />
          <EditingGroup />
        </Ribbon>
        <FormulaBar>
          <NameBox>
            <PlainInput aria-label="Name box" defaultValue="B7" />
            <Chevron size={8} />
          </NameBox>
          <Slot as="span" $w={18}><Dots /></Slot>
          <FxBox>
            <Slot $w={19} aria-label="Cancel">
              <Art box={[0, 0, 30, 30]}><path d="M2 2 L28 28 M28 2 L2 28" stroke="#b4b4b4" strokeWidth="3" /></Art>
            </Slot>
            <Slot $w={19} aria-label="Enter">
              <Art box={[0, 0, 36, 30]}><path d="M1 16 L12 27 L35 3" stroke="#b4b4b4" strokeWidth="3" /></Art>
            </Slot>
            <Slot $w={19}><Fx>fx</Fx></Slot>
            <Chevron size={8} color="#888" />
          </FxBox>
          <FormulaInput aria-label="Formula" />
        </FormulaBar>
        <Sheet>
          <SheetGrid />
          <MacroButtons>
            <MacroButton>Start Simulation</MacroButton>
            <MacroButton>Reset</MacroButton>
          </MacroButtons>
          <TurretChart />
        </Sheet>
        <SheetBar>
          <Slot $w={26} aria-label="Previous sheet">
            <Art box={[0, 0, 12, 24]}><path d="M11 3 L2 12 L11 21" stroke="#999" strokeWidth="3" /></Art>
          </Slot>
          <Slot $w={26} aria-label="Next sheet">
            <Art box={[0, 0, 12, 24]}><path d="M1 3 L10 12 L1 21" stroke="#999" strokeWidth="3" /></Art>
          </Slot>
          <Slot as="span" $w={29} />
          <SheetTab $w={68} $active><span>Simulation</span></SheetTab>
          <Slot as="span" $w={2} />
          <Rule />
          <SheetTab $w={50}><span>Table1</span></SheetTab>
          <Rule />
          <SheetTab $w={50}><span>Table2</span></SheetTab>
          <Rule />
          <Slot $w={76} aria-label="New sheet">
            <Art box={[0, 0, 27, 27]}><path d="M13 0 V27 M0 13 H27" stroke="#444" strokeWidth="3" /></Art>
          </Slot>
          <Spacer />
          <Dots />
          <ScrollTrack>
            <Art box={[0, 0, 18, 24]}><path d="M1 12 L15 3 V21 Z" fill="#666" /></Art>
            <ScrollThumb />
          </ScrollTrack>
        </SheetBar>
      </Window>
    </Stage>
  );
}
